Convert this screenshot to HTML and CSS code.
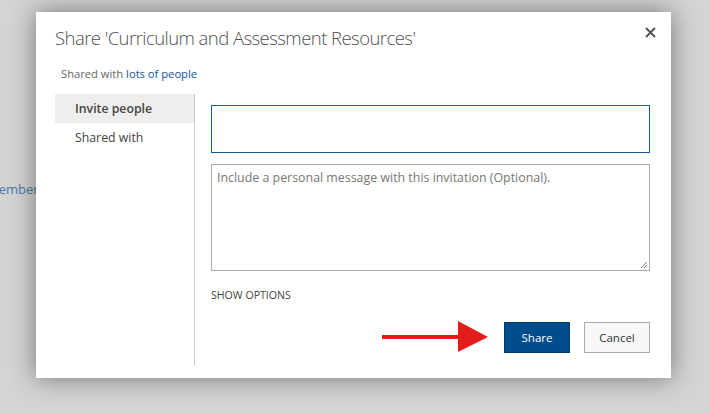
FILE: index.html
```html
<!DOCTYPE html>
<html>
<head>
<meta charset="utf-8">
<link rel="stylesheet" href="styles.css">
</head>
<body>
<div class="page">
  <div class="page-text">Members</div>
</div>
<div class="dialog">
  <h1 class="title">Share 'Curriculum and Assessment Resources'</h1>
  <button class="close" aria-label="Close">
    <svg width="11" height="11" viewBox="0 0 11 11"><path d="M1 1L10 10M10 1L1 10" stroke="#555" stroke-width="2"/></svg>
  </button>
  <div class="shared-line">Shared with <a class="link">lots of people</a></div>
  <div class="body">
    <nav class="nav">
      <div class="nav-item active">Invite people</div>
      <div class="nav-item">Shared with</div>
    </nav>
    <div class="content">
      <div class="people-input"></div>
      <div class="message">
        <span class="placeholder">Include a personal message with this invitation (Optional).</span>
        <svg class="grip" width="8" height="8" viewBox="0 0 8 8"><path d="M7 1L1 7M7 4L4 7M7 6.5L6.5 7" stroke="#777" stroke-width="1"/></svg>
      </div>
      <div class="show-options">SHOW OPTIONS</div>
      <div class="actions">
        <svg class="arrow" width="110" height="32" viewBox="0 0 110 32"><rect x="2" y="14" width="78" height="4" fill="#e31c1c"/><polygon points="78,0 108,16 78,31" fill="#e31c1c"/></svg>
        <button class="btn primary">Share</button>
        <button class="btn">Cancel</button>
      </div>
    </div>
  </div>
</div>
</body>
</html>
```
FILE: styles.css
```css
html, body { margin: 0; padding: 0; }
body {
  width: 709px;
  height: 413px;
  background: #d4d4d4;
  font-family: "Open Sans", "Segoe UI", sans-serif;
  overflow: hidden;
  position: relative;
}
.page { padding-top: 180px; }
.page-text {
  margin-left: -13px;
  font-size: 13px;
  color: #4a78a8;
}
.dialog {
  position: absolute;
  left: 36px;
  top: 12px;
  width: 635px;
  height: 366px;
  box-sizing: border-box;
  background: #fff;
  box-shadow: 0 0 24px rgba(0,0,0,0.45);
  padding: 12px 21px 13px 19px;
  display: flex;
  flex-direction: column;
}
.title {
  margin: 0;
  font-size: 18.5px;
  font-weight: 300;
  color: #505050;
  line-height: 28px;
  letter-spacing: -0.55px;
}
.close {
  position: absolute;
  right: 15px;
  top: 15px;
  width: 11px;
  height: 11px;
  padding: 0;
  border: 0;
  background: none;
  display: flex;
}
.shared-line {
  margin: 14px 0 0 6px;
  font-size: 11.2px;
  color: #666;
  line-height: 16px;
}
.link { color: #0f5596; }
.body {
  flex: 1;
  display: flex;
  margin-top: 12px;
}
.nav {
  width: 139px;
  border-right: 1px solid #c8c8c8;
}
.nav-item {
  font-size: 12.3px;
  color: #444;
  height: 29px;
  line-height: 29px;
  padding-left: 20px;
}
.nav-item.active {
  background: #efeeed;
  font-weight: 600;
}
.content {
  flex: 1;
  padding: 11px 0 0 16px;
  display: flex;
  flex-direction: column;
}
.people-input {
  height: 48px;
  box-sizing: border-box;
  border: 1.5px solid #195c98;
}
.message {
  margin-top: 11px;
  height: 107px;
  box-sizing: border-box;
  border: 1px solid #ababab;
  position: relative;
  padding: 3px 5px;
  line-height: 16px;
}
.placeholder {
  font-size: 12.4px;
  color: #777;
}
.grip { position: absolute; right: 1px; bottom: 1px; }
.show-options {
  margin-top: 17px;
  font-size: 10.6px;
  color: #444;
}
.actions {
  margin-top: 19px;
  display: flex;
  justify-content: flex-end;
  align-items: center;
  gap: 14px;
}
.btn {
  height: 31px;
  width: 66px;
  font-family: inherit;
  font-size: 11.5px;
  color: #333;
  border: 1px solid #ababab;
  background: #f8f8f8;
  padding: 0;
}
.btn.primary {
  background: #004c8c;
  color: #fff;
  border-color: #003a6c;
}
```
